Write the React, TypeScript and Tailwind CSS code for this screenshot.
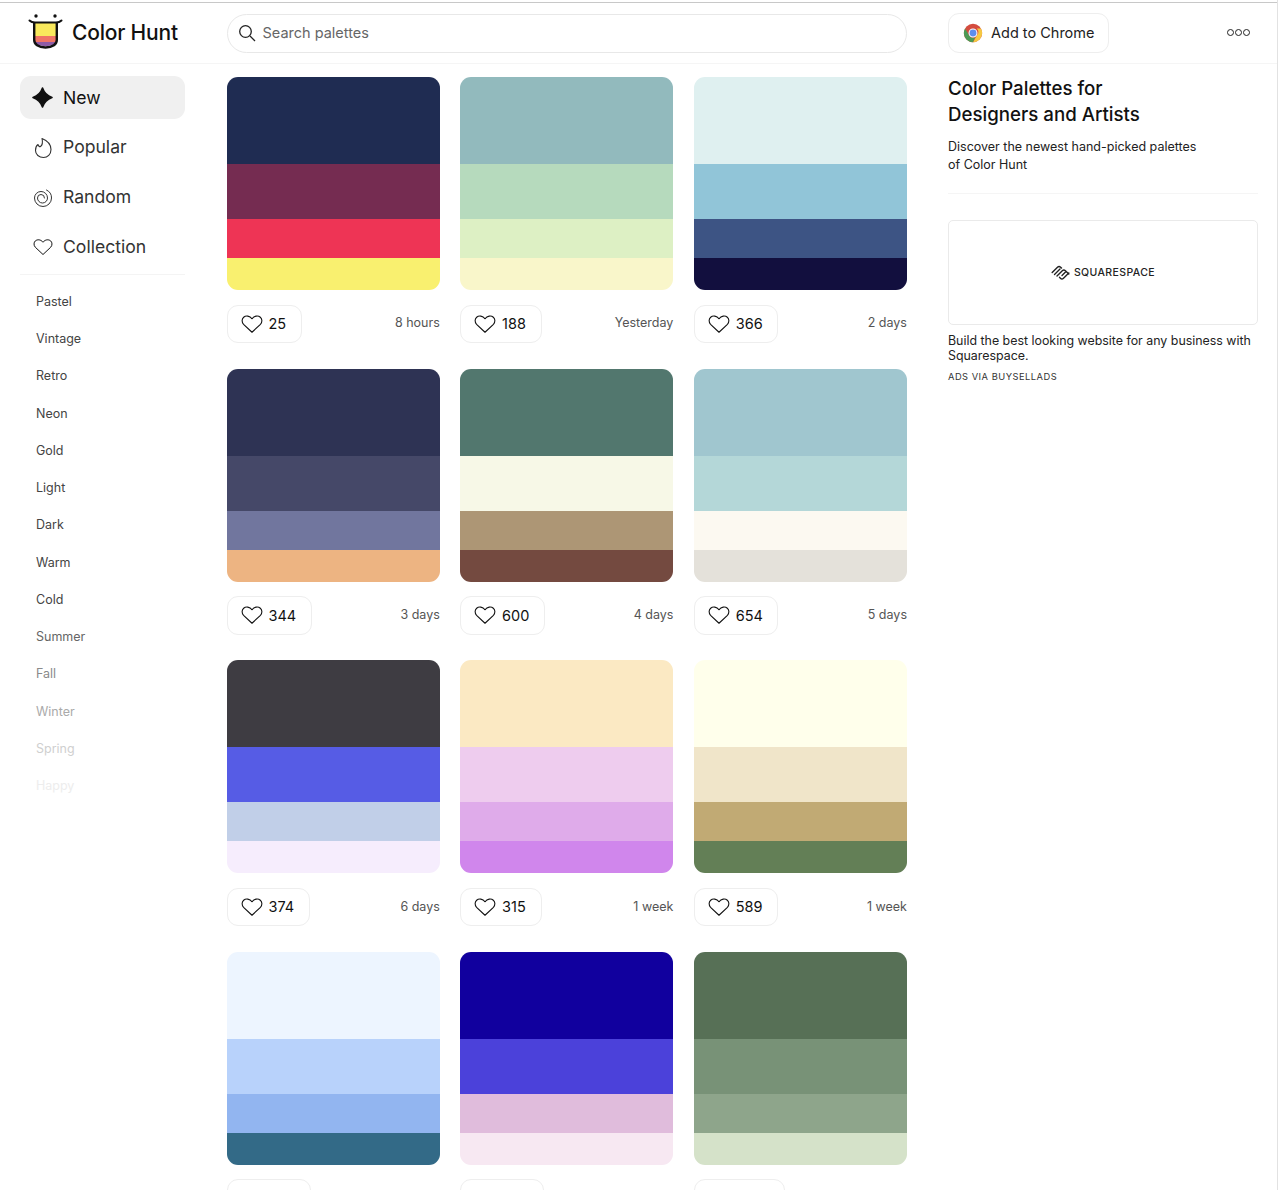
import React from "react";

const font = { fontFamily: "Inter, sans-serif" };

const palettes = [
  { colors: ["#1f2c52", "#752c51", "#ee3455", "#f9f06f"], likes: 25, age: "8 hours", w: "w-[75px]" },
  { colors: ["#92babd", "#b6dabd", "#ddf0c4", "#f9f6ca"], likes: 188, age: "Yesterday", w: "w-[82px]" },
  { colors: ["#dff0f0", "#91c5d8", "#3d5484", "#120f3e"], likes: 366, age: "2 days", w: "w-[84px]" },
  { colors: ["#2e3354", "#454868", "#71769e", "#edb482"], likes: 344, age: "3 days", w: "w-[85px]" },
  { colors: ["#52776e", "#f7f8e7", "#ad9675", "#744a40"], likes: 600, age: "4 days", w: "w-[85px]" },
  { colors: ["#a0c6cf", "#b4d7d8", "#fcf9f1", "#e4e1da"], likes: 654, age: "5 days", w: "w-[84px]" },
  { colors: ["#3e3c42", "#565ce5", "#c1cfe8", "#f6edfd"], likes: 374, age: "6 days", w: "w-[83px]" },
  { colors: ["#fbe9c3", "#eeccee", "#dfabea", "#d086ec"], likes: 315, age: "1 week", w: "w-[82px]" },
  { colors: ["#ffffeb", "#f0e5c9", "#c1aa74", "#637f56"], likes: 589, age: "1 week", w: "w-[84px]" },
  { colors: ["#edf5ff", "#b8d2fb", "#92b5f0", "#336a87"], likes: 0, age: "", w: "w-[84px]" },
  { colors: ["#11009e", "#4b41da", "#e0bcdc", "#f7e8f2"], likes: 0, age: "", w: "w-[84px]" },
  { colors: ["#577056", "#789277", "#8ea58b", "#d5e2c9"], likes: 0, age: "", w: "w-[91px]" },
];

const tags = [
  { name: "Pastel", color: "text-[#444]" },
  { name: "Vintage", color: "text-[#444]" },
  { name: "Retro", color: "text-[#444]" },
  { name: "Neon", color: "text-[#444]" },
  { name: "Gold", color: "text-[#444]" },
  { name: "Light", color: "text-[#444]" },
  { name: "Dark", color: "text-[#444]" },
  { name: "Warm", color: "text-[#444]" },
  { name: "Cold", color: "text-[#444]" },
  { name: "Summer", color: "text-[#666]" },
  { name: "Fall", color: "text-[#8a8a8a]" },
  { name: "Winter", color: "text-[#aaa]" },
  { name: "Spring", color: "text-[#cfcfcf]" },
  { name: "Happy", color: "text-[#ededed]" },
];

function Heart({ size = 22 }: { size?: number }) {
  return (
    <svg width={size} height={size} viewBox="0 0 24 24" fill="none" stroke="#111" strokeWidth="1.2" strokeLinejoin="round">
      <path d="M12 21 2.800 12.300C.6 10 .8 6.400 2.900 4.600 5.300 2.600 9.500 2.900 12 6.300 14.500 2.900 18.700 2.600 21.100 4.600c2.100 1.800 2.300 5.400.1 7.700L12 21Z" />
    </svg>
  );
}

function Logo() {
  return (
    <svg width="35" height="35" viewBox="0 0 35 35" className="mb-[3px]">
      <circle cx="8" cy="2" r="1.700" fill="#111" />
      <circle cx="27" cy="2" r="1.700" fill="#111" />
      <path d="M7 8h21v15H7z" fill="#f9e95c" />
      <path d="M7 22h21v6H7z" fill="#ef7466" />
      <path d="M7 28h21c-1 3-5 4-10.500 4S8 31 7 28z" fill="#8e5ba6" />
      <path d="M1.500 6.500C3 8 5 8.500 7 8.500h21c2 0 4-.5 5.500-2" fill="none" stroke="#111" strokeWidth="2" strokeLinecap="round" />
      <path d="M6.200 8.500V26c0 4 4 7.500 11.300 7.500S28.800 30 28.800 26V8.500" fill="none" stroke="#111" strokeWidth="2.400" />
    </svg>
  );
}

function Chrome() {
  return (
    <svg width="20" height="20" viewBox="0 0 48 48">
      <circle cx="24" cy="24" r="22" fill="#d44c3f" />
      <path d="M43 13A22 22 0 0 1 24 46l9.500-16.500A11 11 0 0 0 33 13z" fill="#f5c842" />
      <path d="M24 46A22 22 0 0 1 5 13l9.500 16.500A11 11 0 0 0 29 34z" fill="#4d9a55" />
      <circle cx="24" cy="24" r="9.500" fill="#5b8def" stroke="#fff" strokeWidth="2.500" />
    </svg>
  );
}

function Squarespace() {
  return (
    <svg width="19" height="15" viewBox="0 0 19 15" fill="none" stroke="#222" strokeWidth="1.400" strokeLinecap="round">
      <path d="M1.200 7.500 6.500 2.200a2.200 2.200 0 0 1 3.100 0l.9.9" />
      <path d="M3.500 9.500 9 4" />
      <path d="M6 11l5.300-5.300a2.200 2.200 0 0 1 3.100 0l3.400 3.400" />
      <path d="M8.500 12.300l.9.9a2.200 2.200 0 0 0 3.100 0L17.800 8" />
      <path d="M11 10.500l3.500-3.500" />
    </svg>
  );
}

function Card({ p }: { p: (typeof palettes)[number] }) {
  return (
    <div>
      <div className="h-[213px] rounded-[11px] overflow-hidden flex flex-col">
        <div className="h-[87px]" style={{ backgroundColor: p.colors[0] }} />
        <div className="h-[55px]" style={{ backgroundColor: p.colors[1] }} />
        <div className="h-[39px]" style={{ backgroundColor: p.colors[2] }} />
        <div className="h-[32px]" style={{ backgroundColor: p.colors[3] }} />
      </div>
      <div className="mt-[14.500px] h-[38.500px] flex items-center justify-between">
        <div className={`${p.w} h-[38.500px] border border-[#eeeeee] rounded-[11px] flex items-center pl-[13px] gap-[6px] text-[14.500px] text-[#111]`}>
          {p.likes > 0 && <Heart />}
          {p.likes > 0 && <span>{p.likes}</span>}
        </div>
        <span className="text-[12.500px] text-[#555]">{p.age}</span>
      </div>
    </div>
  );
}

export default function App() {
  return (
    <div className="h-[1190px] w-[1278px] overflow-hidden bg-white border-r border-[#e2e2e2]" style={font}>
      <div className="h-[2px] bg-white" />
      <div className="h-px bg-[#c8c8c8]" />
      <div className="flex h-[61px] border-b border-[#f5f5f5]">
        <div className="w-[226.500px] shrink-0 pl-[28px] flex items-center gap-[9px]">
          <Logo />
          <span className="text-[21px] font-medium text-[#111] tracking-[-0.2px]">Color Hunt</span>
        </div>
        <div className="w-[680.500px] shrink-0 h-[38.500px] mt-[11px] border border-[#e8e8e8] rounded-full flex items-center pl-[10px] gap-[7px] text-[14.500px] text-[#666]">
          <svg width="18" height="18" viewBox="0 0 18 18" fill="none" stroke="#222" strokeWidth="1.300">
            <circle cx="7.500" cy="7.500" r="5.800" />
            <path d="m12 12 5 5" />
          </svg>
          Search palettes
        </div>
        <div className="ml-[41px] w-[161px] shrink-0 h-[40px] mt-[10px] border border-[#eeeeee] rounded-[11px] flex items-center pl-[14px] gap-[8px] text-[14.500px] text-[#222]">
          <Chrome />
          Add to Chrome
        </div>
        <div className="ml-[118px] mt-[26px] flex gap-[1px] h-[7px]">
          <span className="w-[7px] h-[7px] rounded-full border border-[#222]" />
          <span className="w-[7px] h-[7px] rounded-full border border-[#222]" />
          <span className="w-[7px] h-[7px] rounded-full border border-[#222]" />
        </div>
      </div>
      <div className="flex">
        <aside className="w-[226.500px] shrink-0 pl-[20px] pt-[12px]">
          <div className="w-[165px] h-[43px] bg-[#f0f0f0] rounded-[11px] flex items-center pl-[12px] gap-[10px] text-[17.600px] text-[#111]">
            <svg width="21" height="21" viewBox="0 0 21 21">
              <path d="M10.500 1c1.500 4.500 4.500 7.700 9.500 9.500-5 1.800-8 5-9.500 9.500C9 15.500 6 12.300 1 10.500 6 8.700 9 5.500 10.500 1z" fill="#111" stroke="#111" strokeWidth="1.600" strokeLinejoin="round" />
            </svg>
            <span className="mt-[1px]">New</span>
          </div>
          <div className="h-[50px] mt-[3.500px] flex items-center pl-[13px] gap-[10px] text-[17.600px] text-[#333]">
            <svg width="20" height="22" viewBox="0 0 20 22" fill="none" stroke="#333" strokeWidth="1.100" strokeLinejoin="round">
              <path d="M9 1.500C14 3.500 18 7.500 18 12.500 18 17.500 14.500 20.500 10.500 20.500 6 20.500 2.500 17.500 2.500 13.500 2.500 11 3.500 8.500 5 7.500 5.500 9 6.500 10 7.500 9.500 9 8.500 9.800 5 9 1.500Z" />
            </svg>
            Popular
          </div>
          <div className="h-[50px] flex items-center pl-[13px] gap-[10px] text-[17.600px] text-[#333]">
            <svg width="20" height="22" viewBox="0 0 20 22" fill="none" stroke="#333" strokeWidth="1" strokeLinecap="round">
              <path d="M13.500 3A8.500 8.500 0 0 1 18.500 11A8.500 8.500 0 0 1 1.500 11A6.500 6.500 0 0 1 14.500 11A5 5 0 0 1 4.500 11A3.500 3.500 0 0 1 11.500 11" />
            </svg>
            Random
          </div>
          <div className="h-[49.500px] flex items-center pl-[13px] gap-[10px] text-[17.600px] text-[#333]">
            <Heart size={20} />
            Collection
          </div>
          <div className="h-px bg-[#f4f4f4] w-[165px] mt-[2px] mb-[8.500px]" />
          {tags.map((t) => (
            <div key={t.name} className={`h-[37.250px] pl-[16px] flex items-center text-[12.500px] ${t.color}`}>
              {t.name}
            </div>
          ))}
        </aside>
        <main className="w-[680.500px] shrink-0 pt-[13px] grid grid-cols-3 gap-x-[20.300px] gap-y-[25.670px] content-start">
          {palettes.map((p, i) => (
            <Card key={i} p={p} />
          ))}
        </main>
        <aside className="ml-[41px] w-[310px] shrink-0 pt-[12px]">
          <h2 className="text-[18.700px] leading-[26px] font-medium text-[#111]">
            Color Palettes for
            <br />
            Designers and Artists
          </h2>
          <p className="mt-[10px] text-[12.500px] leading-[17.500px] text-[#222]">
            Discover the newest hand-picked palettes
            <br />
            of Color Hunt
          </p>
          <div className="mt-[20px] h-px bg-[#f5f5f5]" />
          <div className="mt-[26px] h-[105px] border border-[#eaeaea] rounded-[5px] flex items-center justify-center gap-[4px]">
            <Squarespace />
            <span className="text-[10.500px] font-medium tracking-[0.4px] text-[#222]">SQUARESPACE</span>
          </div>
          <p className="mt-[8px] text-[12.400px] leading-[15px] text-[#222]">
            Build the best looking website for any business with Squarespace.
          </p>
          <p className="mt-[7px] text-[9.300px] tracking-[0.5px] text-[#333]">ADS VIA BUYSELLADS</p>
        </aside>
      </div>
    </div>
  );
}
